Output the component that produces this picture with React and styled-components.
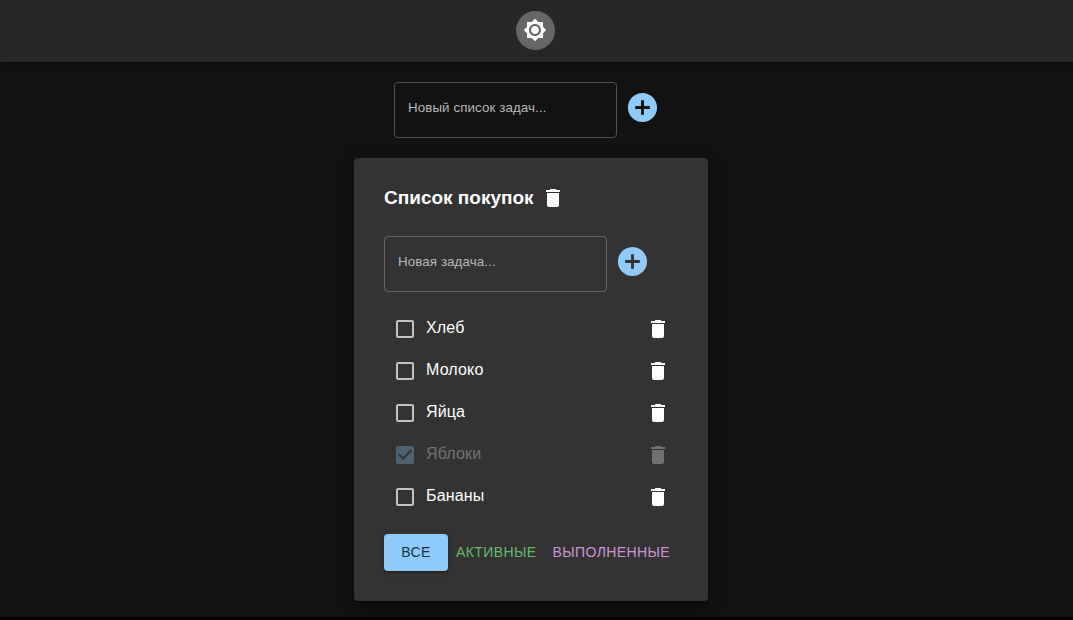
import React, { useState } from "react";
import styled, { createGlobalStyle } from "styled-components";

const GlobalStyle = createGlobalStyle`
  *, *::before, *::after { box-sizing: border-box; }
  html { background: #121212; }
  body {
    margin: 0;
    color: #fff;
    font-family: "Liberation Sans", Arial, sans-serif;
    font-size: 16px;
    line-height: 1.5;
  }
`;

const Page = styled.div`
  display: flex;
  flex-direction: column;
  height: 620px;
  overflow: hidden;
  border-bottom: 3px solid #070305;
  background: #121212;
`;

const TopBar = styled.header`
  display: flex;
  justify-content: center;
  align-items: center;
  flex: none;
  height: 62px;
  padding: 0 3px 2px 0;
  background: #272727;
  box-shadow: 0 2px 4px -1px rgba(0, 0, 0, 0.2), 0 4px 5px rgba(0, 0, 0, 0.14),
    0 1px 10px rgba(0, 0, 0, 0.12);
`;

const ThemeButton = styled.button`
  display: flex;
  justify-content: center;
  align-items: center;
  width: 39px;
  height: 39px;
  padding: 0;
  border: 0;
  border-radius: 50%;
  color: #fff;
  background: #666;
`;

const Content = styled.main`
  display: flex;
  flex-direction: column;
  padding: 20px 0 0 354px;
`;

const Form = styled.form`
  display: flex;
  align-items: center;
  gap: 8px;
  margin-left: ${({ $indent }) => $indent || 0}px;
`;

const Input = styled.input`
  width: 223px;
  height: 56px;
  padding: 0 13px 6px;
  border: 1px solid ${({ $border }) => $border};
  border-radius: 4px;
  outline: none;
  color: #fff;
  background: transparent;
  font: 13.333px "Liberation Sans", Arial, sans-serif;
  letter-spacing: 0.1px;
  &::placeholder { color: #b8b8b8; opacity: 1; }
`;

const AddButton = styled.button`
  display: flex;
  margin: 0 0 5px;
  padding: 0;
  border: 0;
  color: #90caf9;
  background: none;
`;

const Card = styled.section`
  display: flex;
  flex-direction: column;
  width: 354px;
  height: 443px;
  margin-top: 20px;
  padding: 24px 30px 30px;
  border-radius: 4px;
  background: #333;
  box-shadow: 0 5px 6px -3px rgba(0, 0, 0, 0.2), 0 9px 12px 1px rgba(0, 0, 0, 0.14),
    0 3px 16px 2px rgba(0, 0, 0, 0.12);
`;

const CardHeader = styled.div`
  display: flex;
  align-items: center;
  gap: 7px;
  height: 32px;
  margin-bottom: 22px;
`;

const Title = styled.h3`
  margin: 0;
  font-size: 19px;
  line-height: 30px;
`;

const DeleteButton = styled.button`
  display: flex;
  padding: 0;
  border: 0;
  color: #fff;
  background: none;
`;

const List = styled.ul`
  margin: 16px 0 0;
  padding: 0;
  list-style: none;
`;

const Item = styled.li`
  display: flex;
  align-items: center;
  height: 42px;
  padding: 0 8px 0 9px;
  opacity: ${({ $done }) => ($done ? 0.3 : 1)};
`;

const Check = styled.button`
  display: flex;
  padding: 0;
  border: 0;
  color: ${({ $done }) => ($done ? "#90caf9" : "#c2c2c2")};
  background: none;
`;

const Label = styled.span`
  flex: 1;
  padding: 0 0 3px 9px;
  line-height: 24px;
  letter-spacing: 0.15px;
`;

const Filters = styled.div`
  display: flex;
  margin-top: 16px;
`;

const FilterButton = styled.button`
  min-width: 64px;
  height: 37px;
  padding: 0 8px 2px;
  border: 0;
  border-radius: 4px;
  color: ${({ $color, $active }) => ($active ? "#15304a" : $color)};
  background: ${({ $color, $active }) => ($active ? $color : "transparent")};
  box-shadow: ${({ $active }) =>
    $active
      ? "0 3px 1px -2px rgba(0,0,0,.2), 0 2px 2px rgba(0,0,0,.14), 0 1px 5px rgba(0,0,0,.12)"
      : "none"};
  font: 14px "Liberation Sans", Arial, sans-serif;
  letter-spacing: 0.4px;
  text-transform: uppercase;
`;

const paths = {
  sun: "M20 8.69V4h-4.69L12 .69 8.69 4H4v4.69L.69 12 4 15.31V20h4.69L12 23.31 15.31 20H20v-4.69L23.31 12 20 8.69zM12 18c-3.31 0-6-2.69-6-6s2.69-6 6-6 6 2.69 6 6-2.69 6-6 6zm0-10c-2.21 0-4 1.79-4 4s1.79 4 4 4 4-1.79 4-4-1.79-4-4-4z",
  add: "M12 2C6.48 2 2 6.48 2 12s4.48 10 10 10 10-4.48 10-10S17.52 2 12 2zm5 11h-4v4h-2v-4H7v-2h4V7h2v4h4v2z",
  trash: "M6 19c0 1.1.9 2 2 2h8c1.1 0 2-.9 2-2V7H6v12zM19 4h-3.5l-1-1h-5l-1 1H5v2h14V4z",
  box: "M19 5v14H5V5h14m0-2H5c-1.1 0-2 .9-2 2v14c0 1.1.9 2 2 2h14c1.1 0 2-.9 2-2V5c0-1.1-.9-2-2-2z",
  checked: "M19 3H5c-1.11 0-2 .9-2 2v14c0 1.1.89 2 2 2h14c1.11 0 2-.9 2-2V5c0-1.1-.89-2-2-2zm-9 14l-5-5 1.41-1.41L10 14.17l7.59-7.59L19 8l-9 9z",
};

const Icon = ({ name, size = 24 }) => (
  <svg width={size} height={size} viewBox="0 0 24 24" fill="currentColor" aria-hidden="true">
    <path d={paths[name]} />
  </svg>
);

const AddForm = ({ placeholder, indent, border, onAdd }) => {
  const [value, setValue] = useState("");
  const submit = (e) => {
    e.preventDefault();
    if (value.trim() && onAdd) onAdd(value.trim());
    setValue("");
  };
  return (
    <Form $indent={indent} onSubmit={submit}>
      <Input
        $border={border}
        placeholder={placeholder}
        value={value}
        onChange={(e) => setValue(e.target.value)}
      />
      <AddButton type="submit">
        <Icon name="add" size={35} />
      </AddButton>
    </Form>
  );
};

const filters = [
  { id: "all", label: "Все", color: "#90caf9" },
  { id: "active", label: "Активные", color: "#66bb6a" },
  { id: "completed", label: "Выполненные", color: "#ce93d8" },
];

export default function App() {
  const [filter, setFilter] = useState("all");
  const [tasks, setTasks] = useState([
    { id: 1, title: "Хлеб", done: false },
    { id: 2, title: "Молоко", done: false },
    { id: 3, title: "Яйца", done: false },
    { id: 4, title: "Яблоки", done: true },
    { id: 5, title: "Бананы", done: false },
  ]);
  const visible = tasks.filter((t) => filter === "all" || t.done === (filter === "completed"));
  const toggle = (id) => setTasks(tasks.map((t) => (t.id === id ? { ...t, done: !t.done } : t)));

  return (
    <Page>
      <GlobalStyle />
      <TopBar>
        <ThemeButton>
          <Icon name="sun" />
        </ThemeButton>
      </TopBar>
      <Content>
        <AddForm placeholder="Новый список задач..." indent={40} border="#505050" />
        <Card>
          <CardHeader>
            <Title>Список покупок</Title>
            <DeleteButton>
              <Icon name="trash" />
            </DeleteButton>
          </CardHeader>
          <AddForm
            placeholder="Новая задача..."
            border="#666"
            onAdd={(title) => setTasks([{ id: Date.now(), title, done: false }, ...tasks])}
          />
          <List>
            {visible.map((t) => (
              <Item key={t.id} $done={t.done}>
                <Check $done={t.done} onClick={() => toggle(t.id)}>
                  <Icon name={t.done ? "checked" : "box"} />
                </Check>
                <Label>{t.title}</Label>
                <DeleteButton onClick={() => setTasks(tasks.filter((x) => x.id !== t.id))}>
                  <Icon name="trash" />
                </DeleteButton>
              </Item>
            ))}
          </List>
          <Filters>
            {filters.map((f) => (
              <FilterButton
                key={f.id}
                $color={f.color}
                $active={filter === f.id}
                onClick={() => setFilter(f.id)}
              >
                {f.label}
              </FilterButton>
            ))}
          </Filters>
        </Card>
      </Content>
    </Page>
  );
}
